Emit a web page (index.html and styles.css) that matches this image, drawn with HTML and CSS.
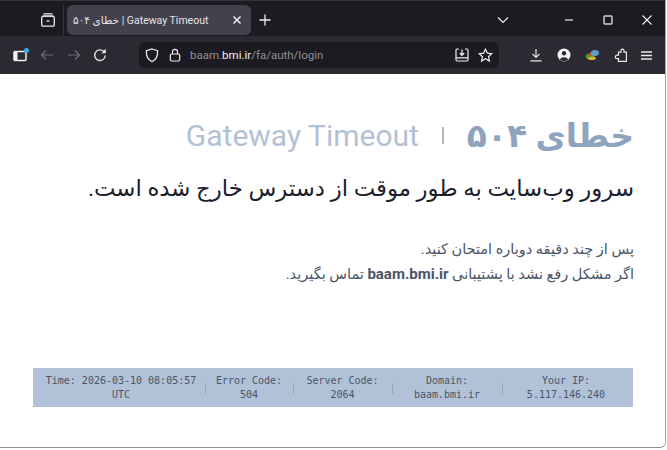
FILE: index.html
```html
<!DOCTYPE html>
<html lang="fa">
<head>
    <meta charset="UTF-8">
    <title>خطای ۵۰۴ | Gateway Timeout</title>
    <link rel="stylesheet" href="styles.css">
</head>
<body>
    <div class="window">
        <header class="tabbar" dir="ltr">
            <div class="tab-side">
                <svg class="icon" width="16" height="16" viewBox="0 0 16 16" fill="none" stroke="#e8e8ea" stroke-width="1.3"><path d="M3.5 1.8h9M2.5 4.2h11"/><rect x="1.7" y="4.2" width="12.6" height="10" rx="2"/><path d="M6.5 9h3"/></svg>
            </div>
            <div class="tab">
                <span class="tab-title">خطای ۵۰۴ | Gateway Timeout</span>
                <svg width="10" height="10" viewBox="0 0 10 10" stroke="#f0f0f2" stroke-width="1.5"><path d="M1.5 1.5l7 7M8.5 1.5l-7 7"/></svg>
            </div>
            <svg class="new-tab" width="12" height="12" viewBox="0 0 12 12" stroke="#f0f0f2" stroke-width="1.3"><path d="M6 .5v11M.5 6h11"/></svg>
            <div class="spacer"></div>
            <svg class="tab-list" width="12" height="8" viewBox="0 0 12 8" fill="none" stroke="#e8e8ea" stroke-width="1.2"><path d="M1 1.5l5 5 5-5"/></svg>
            <div class="win-btns">
                <svg width="10" height="10" viewBox="0 0 10 10" stroke="#c8c8cc" stroke-width="1.4"><path d="M1 5h8"/></svg>
                <svg width="10" height="10" viewBox="0 0 10 10" fill="none" stroke="#d8d0de" stroke-width="1.4"><rect x="1" y="1" width="8" height="8" rx="1"/></svg>
                <svg width="10" height="10" viewBox="0 0 10 10" stroke="#f0f0f2" stroke-width="1.1"><path d="M.5.5l9 9M9.5.5l-9 9"/></svg>
            </div>
        </header>
        <nav class="toolbar" dir="ltr">
            <svg class="sidebar-btn" width="16" height="14" viewBox="0 0 16 14"><rect x="1" y="3.5" width="12" height="9" rx="1" fill="none" stroke="#f2f2f4" stroke-width="1.5"/><rect x="1" y="3.5" width="3.5" height="9" fill="#f2f2f4"/><circle cx="13.500" cy="2.500" r="2.500" fill="#3ba7e8"/></svg>
            <svg class="nav-btn" width="14" height="12" viewBox="0 0 14 12" fill="none" stroke="#6e6e76" stroke-width="1.2"><path d="M13 6H1.500M6 1.500L1.500 6 6 10.500"/></svg>
            <svg class="nav-btn" width="14" height="12" viewBox="0 0 14 12" fill="none" stroke="#6e6e76" stroke-width="1.2"><path d="M1 6h11.500M8 1.500L12.500 6 8 10.500"/></svg>
            <svg class="nav-btn" width="14" height="14" viewBox="0 0 14 14" fill="none" stroke="#e8e8ea" stroke-width="1.3"><path d="M12.300 7.500a5.300 5.300 0 1 1-1.700-4.200L12 4.600"/><path d="M12.800 .8v4.400H8.400z" fill="#e8e8ea" stroke="none"/></svg>
            <div class="urlbar">
                <svg width="14" height="15" viewBox="0 0 14 15" fill="none" stroke="#ececee" stroke-width="1.2"><path d="M7 1l5.600 1.800c.3 4.800-1.200 8.800-5.600 11C2.600 11.600 1.100 7.600 1.400 2.800z"/></svg>
                <svg class="lock" width="12" height="14" viewBox="0 0 12 14" fill="none" stroke="#ececee" stroke-width="1.2"><rect x="1.300" y="6" width="9.400" height="7" rx="1.500"/><path d="M3.500 6V3.800a2.500 2.500 0 0 1 5 0V6"/></svg>
                <span class="url">baam.<b>bmi.ir</b>/fa/auth/login</span>
                <div class="spacer"></div>
                <svg width="14" height="14" viewBox="0 0 14 14" fill="none" stroke="#f0f0f2" stroke-width="1.2"><path d="M4 1H2.200A1.200 1.200 0 0 0 1 2.200v9.600A1.200 1.200 0 0 0 2.200 13h9.600a1.200 1.200 0 0 0 1.200-1.200V2.200A1.200 1.200 0 0 0 11.800 1H10M1 9.800h12M7 1.500v5.500M4.800 5L7 7.300 9.200 5"/></svg>
                <svg width="15" height="15" viewBox="0 0 15 15" fill="none" stroke="#f0f0f2" stroke-width="1.2"><path d="M7.500 1.200l1.900 4 4.300.5-3.200 3 .9 4.300-3.900-2.200L3.600 13l.9-4.300-3.200-3 4.300-.5z"/></svg>
            </div>
            <div class="tools">
                <svg width="14" height="14" viewBox="0 0 14 14" fill="none" stroke="#e8e8ea" stroke-width="1.2"><path d="M7 1v8M3.500 5.800L7 9.300l3.500-3.500M1.500 12.800h11"/></svg>
                <svg width="14" height="14" viewBox="0 0 14 14"><circle cx="7" cy="7" r="6.500" fill="#f2f2f4"/><circle cx="7" cy="5.300" r="2.200" fill="#2b2a33"/><path d="M2.800 11.500a4.500 3.600 0 0 1 8.400 0 6 6 0 0 1-8.400 0z" fill="#2b2a33"/></svg>
                <svg width="15" height="12" viewBox="0 0 15 12"><ellipse cx="5" cy="7.500" rx="4.500" ry="3" fill="#3f9a38"/><ellipse cx="7" cy="9.200" rx="4" ry="1.800" fill="#d8b030"/><path d="M3 6l4-4 3 2-4 3z" fill="#c94a3a"/><ellipse cx="10" cy="4" rx="4" ry="3" fill="#5f9ad0"/></svg>
                <svg width="13" height="14" viewBox="0 0 13 14" fill="none" stroke="#e8e8ea" stroke-width="1.2"><path d="M4.500 4.200H7V2.600a1.500 1.500 0 0 1 3 0v1.600h2.400v9.200H4.500v-2.800H3a1.700 1.700 0 0 1 0-3.400h1.500z"/></svg>
                <svg width="11" height="9" viewBox="0 0 11 9" stroke="#e8e8ea" stroke-width="1.3"><path d="M0 1h11M0 4.500h11M0 8h11"/></svg>
            </div>
        </nav>
        <main class="page" dir="rtl">
            <h1 class="title">
                <span class="code">خطای ۵۰۴</span>
                <span class="sep">|</span>
                <span class="name">Gateway Timeout</span>
            </h1>
            <h2 class="subtitle">سرور وب‌سایت به طور موقت از دسترس خارج شده است.</h2>
            <p class="message">پس از چند دقیقه دوباره امتحان کنید.<br>اگر مشکل رفع نشد با پشتیبانی <b>baam.bmi.ir</b> تماس بگیرید.</p>
            <div class="info" dir="ltr">
                <div class="info-item">Time: 2026-03-10 08:05:57 UTC</div>
                <div class="info-item">Error Code:<br>504</div>
                <div class="info-item">Server Code:<br>2064</div>
                <div class="info-item">Domain:<br>baam.bmi.ir</div>
                <div class="info-item">Your IP:<br>5.117.146.240</div>
            </div>
        </main>
    </div>
</body>
</html>
```

FILE: styles.css
```css
html, body {
    margin: 0;
    padding: 0;
    height: 100%;
    background-color: #ffffff;
}
.window {
    display: flex;
    flex-direction: column;
    width: 666px;
    height: 448px;
    box-sizing: border-box;
    border-right: 1px solid #a8a8a8;
    border-bottom: 1px solid #8f8f8f;
    border-bottom-right-radius: 6px;
    overflow: hidden;
    font-family: Roboto, "DejaVu Sans", sans-serif;
}
.tabbar {
    display: flex;
    align-items: center;
    height: 36px;
    flex: none;
    padding-top: 3px;
    box-sizing: border-box;
    border-top: 1px solid #35343a;
    background-color: #1c1b22;
}
.tab-side {
    display: flex;
    align-items: center;
    justify-content: center;
    width: 64px;
    height: 32px;
    padding-left: 33px;
    box-sizing: border-box;
    border-right: 1px solid #35343c;
}
.tab {
    display: flex;
    align-items: center;
    justify-content: space-between;
    width: 184px;
    height: 30px;
    margin-left: 3px;
    padding: 0 9px 0 6px;
    box-sizing: border-box;
    border-radius: 6px;
    background-color: #42414d;
}
.tab-title {
    color: #e4e4e8;
    font-size: 10.5px;
    white-space: nowrap;
}
.new-tab {
    margin-left: 8px;
}
.spacer {
    flex: 1;
}
.tab-list {
    margin-right: 55px;
}
.win-btns {
    display: flex;
    align-items: center;
    gap: 29px;
    margin-right: 13px;
}
.toolbar {
    display: flex;
    align-items: center;
    height: 38px;
    flex: none;
    background-color: #2b2a33;
    padding-left: 13px;
    box-sizing: border-box;
}
.nav-btn {
    margin-left: 12.5px;
}
.sidebar-btn + .nav-btn {
    margin-left: 11px;
}
.urlbar {
    display: flex;
    align-items: center;
    gap: 9px;
    width: 360px;
    height: 26px;
    margin-left: 32px;
    padding: 0 6px;
    box-sizing: border-box;
    border-radius: 6px;
    background-color: #1c1b22;
}
.lock {
    margin-left: 1px;
}
.url {
    color: #8f8f96;
    font-size: 11.5px;
    white-space: nowrap;
}
.url b {
    color: #f0f0f2;
    font-weight: 400;
}
.tools {
    display: flex;
    align-items: center;
    gap: 14px;
    margin-left: 30px;
}
.page {
    flex: 1;
    display: flex;
    flex-direction: column;
    background-color: #ffffff;
    padding: 41px 31px 40px 33px;
    color: #1f2937;
}
.title {
    display: flex;
    align-items: center;
    gap: 21.5px;
    margin: 0;
    height: 40px;
    font-size: 30px;
    font-weight: 400;
}
.code {
    color: #8fa3bf;
    font-weight: 700;
    font-size: 33px;
}
.sep {
    color: #8fa3bf;
    font-size: 20px;
}
.name {
    color: #b3c1d6;
}
.subtitle {
    margin: 16px 0 0 0;
    font-size: 22.8px;
    font-weight: 400;
    line-height: 36px;
    color: #1a202c;
}
.message {
    margin: 30px 0 0 0;
    font-size: 14.5px;
    line-height: 25px;
    color: #4a5568;
}
.message b {
    font-family: Roboto, sans-serif;
    font-weight: 700;
    font-size: 15px;
}
.info {
    display: grid;
    grid-template-columns: 172px 88px 99px 110px 131px;
    align-items: center;
    height: 39px;
    margin: auto 1px 0 0;
    background-color: #b1c1d8;
    color: #4a5568;
    font-family: "DejaVu Sans Mono", monospace;
    font-size: 10px;
    line-height: 14px;
    text-align: center;
}
.info-item {
    position: relative;
}
.info-item:first-child {
    padding: 0 3px 0 7px;
}
.info-item:last-child {
    padding-right: 3px;
}
.info-item + .info-item::before {
    content: "";
    position: absolute;
    left: 0;
    top: 9px;
    height: 11px;
    border-left: 1px solid #94a7c2;
}
```
